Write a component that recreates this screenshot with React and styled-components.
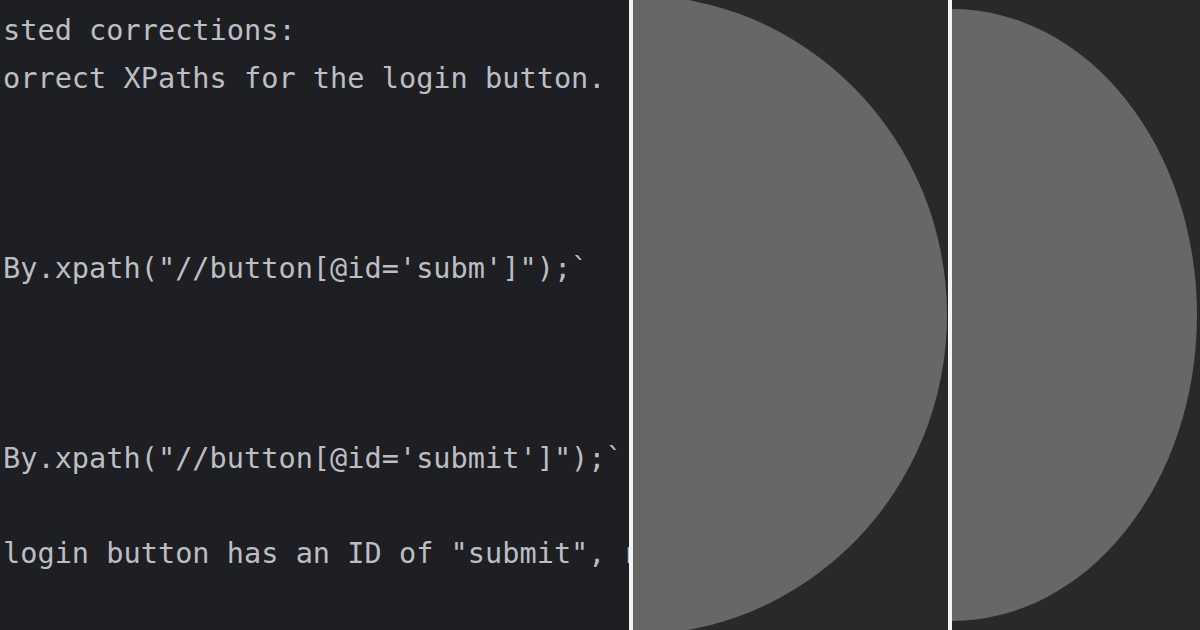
import React from "react";
import styled, { createGlobalStyle } from "styled-components";

const Global = createGlobalStyle`
  html, body {
    margin: 0;
    padding: 0;
    background: #1e1f22;
  }
`;

const Page = styled.div`
  display: flex;
  width: 1200px;
  height: 630px;
  overflow: hidden;
`;

const Code = styled.div`
  width: 629px;
  flex: none;
  background: #1e1f22;
  padding: 7px 0 0 3px;
  box-sizing: border-box;
  overflow: hidden;
  font-family: "DejaVu Sans Mono", "Liberation Mono", monospace;
  font-size: 28.6px;
  line-height: 47.5px;
  color: #bcbec4;
`;

const Line = styled.div`
  white-space: pre;
  height: 47.5px;
`;

const Divider = styled.div`
  width: 4px;
  flex: none;
  background: #f4f4f4;
`;

const Panel = styled.div`
  display: flex;
  align-items: center;
  width: ${(p) => p.$w || "auto"};
  flex: ${(p) => (p.$w ? "none" : "1")};
  background: #292929;
  overflow: hidden;
`;

const Half = styled.div`
  flex: none;
  width: ${(p) => p.$w}px;
  height: ${(p) => p.$h}px;
  background: #676767;
  border-top-right-radius: 100% 50%;
  border-bottom-right-radius: 100% 50%;
`;

const lines = [
  "sted corrections:",
  "orrect XPaths for the login button.",
  "",
  "",
  "",
  "By.xpath(\"//button[@id='subm']\");`",
  "",
  "",
  "",
  "By.xpath(\"//button[@id='submit']\");`",
  "",
  "login button has an ID of \"submit\", r",
];

export default function App() {
  return (
    <>
      <Global />
      <Page>
        <Code>
          {lines.map((l, i) => (
            <Line key={i}>{l}</Line>
          ))}
        </Code>
        <Divider />
        <Panel $w="315px">
          <Half $w={314} $h={640} />
        </Panel>
        <Divider />
        <Panel>
          <Half $w={245} $h={612} />
        </Panel>
      </Page>
    </>
  );
}
